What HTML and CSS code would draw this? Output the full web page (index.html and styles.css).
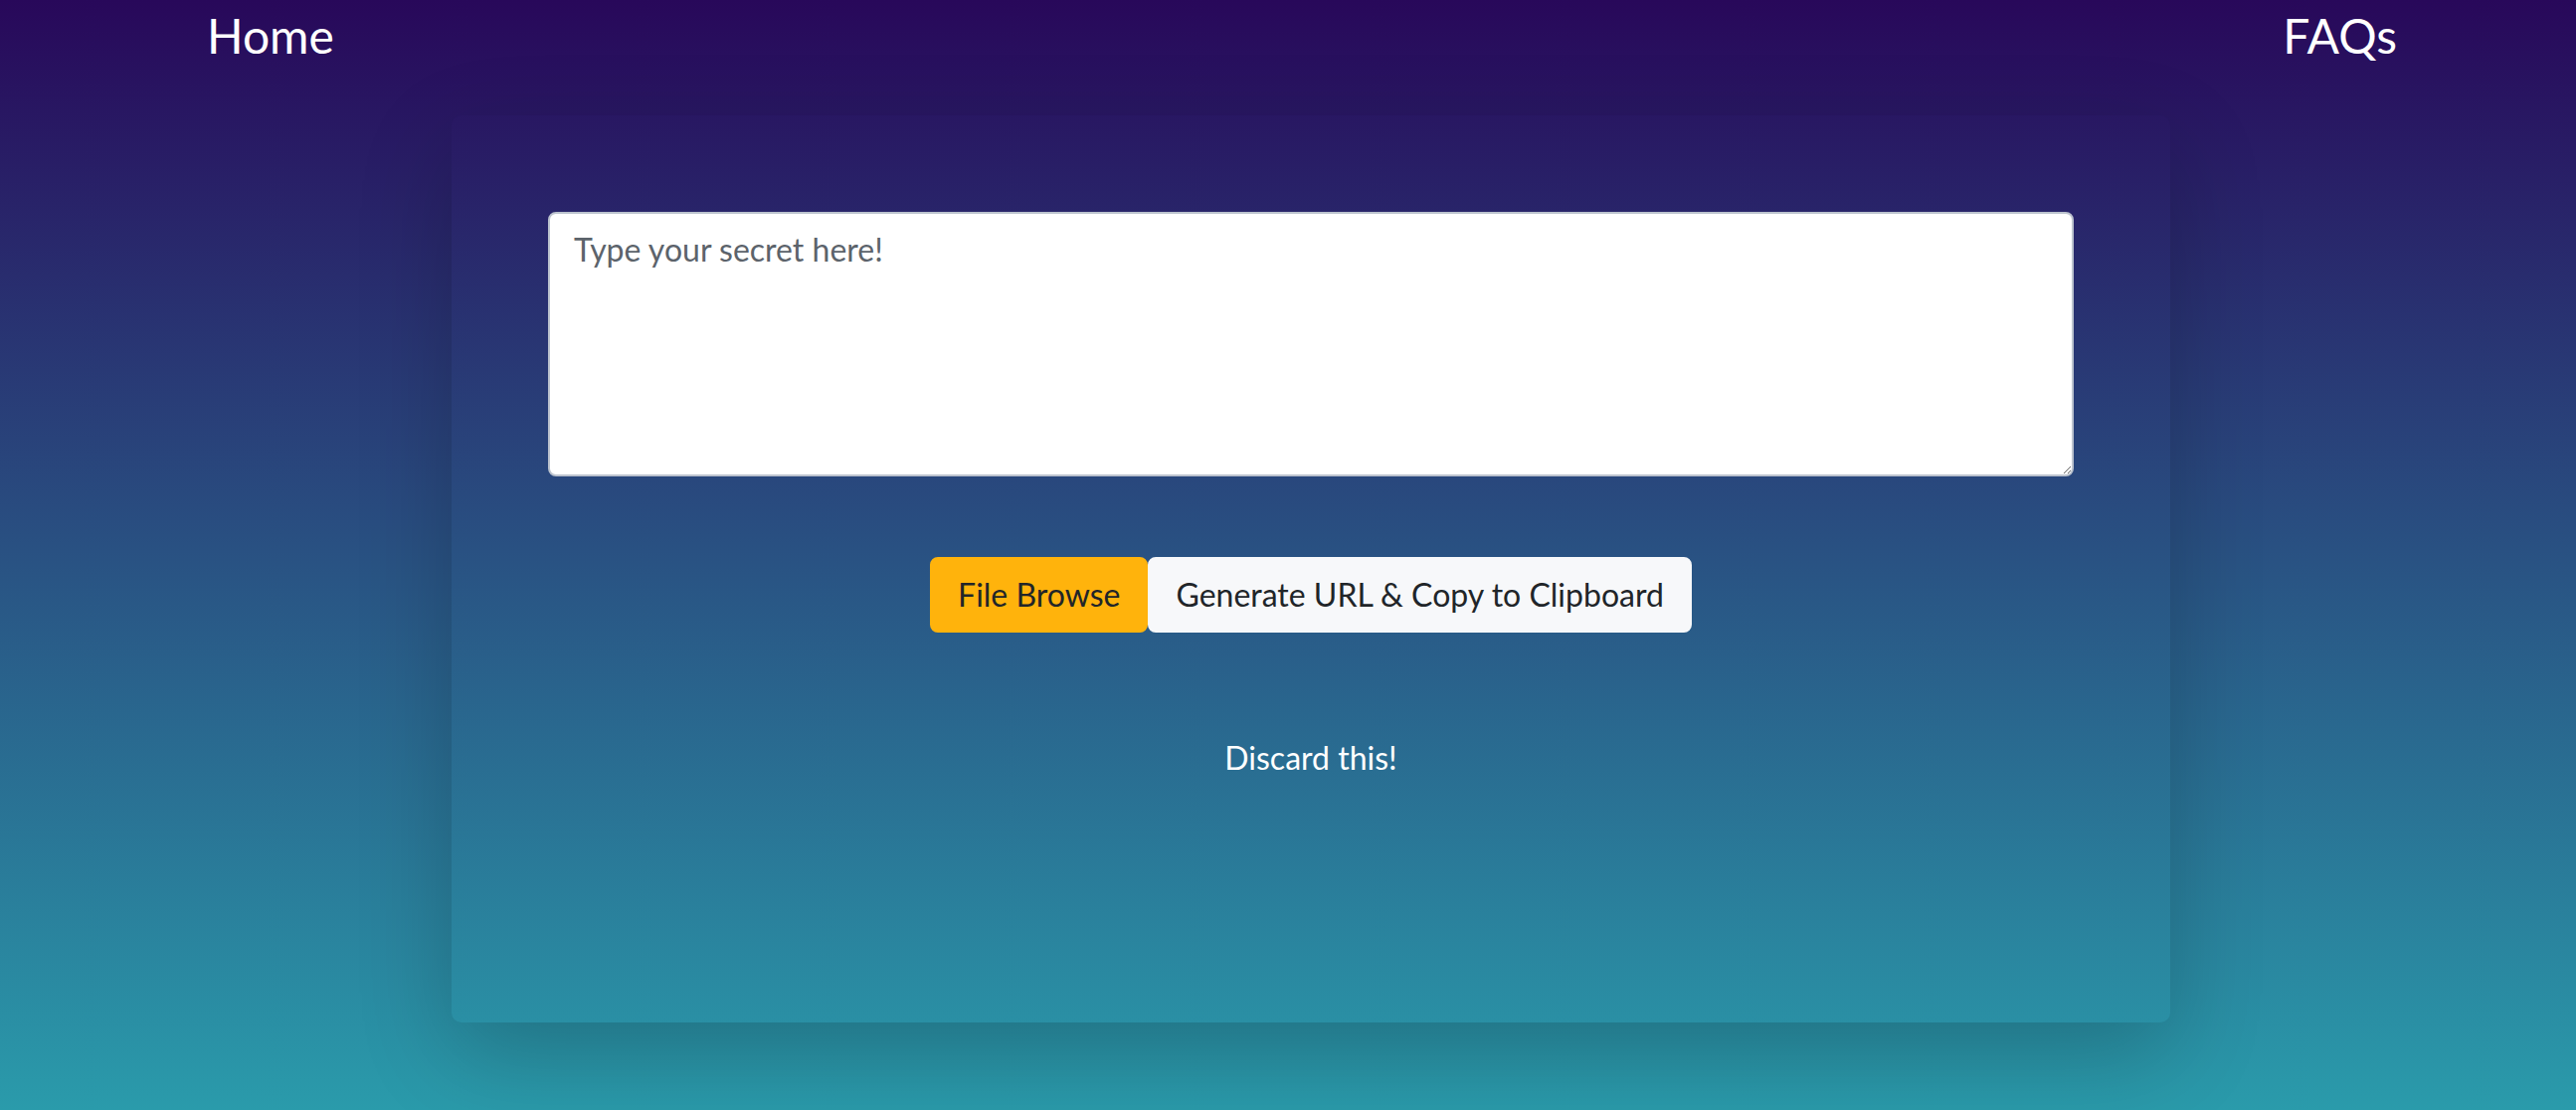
FILE: index.html
```html
<!DOCTYPE html>
<html lang="en">
<head>
<meta charset="utf-8">
<title>Secret</title>
<link rel="stylesheet" href="styles.css">
</head>
<body>
<nav class="nav">
  <a class="nav-link" href="#">Home</a>
  <a class="nav-link" href="#">FAQs</a>
</nav>
<main class="card">
  <textarea class="secret" placeholder="Type your secret here!"></textarea>
  <div class="actions">
    <button class="btn btn-warning" type="button">File Browse</button>
    <button class="btn btn-light" type="button">Generate URL &amp; Copy to Clipboard</button>
  </div>
  <div class="discard">Discard this!</div>
</main>
</body>
</html>
```

FILE: styles.css
```css
html, body {
  margin: 0;
  padding: 0;
}
body {
  height: 1116px;
  overflow: hidden;
  background: linear-gradient(to bottom, #28085a 0%, #2a9bab 100%);
  font-family: Lato, "Noto Sans", sans-serif;
  color: #fff;
}
.nav {
  display: flex;
  justify-content: space-between;
  padding: 0 180px 0 208px;
  height: 72px;
}
.nav-link {
  color: #fff;
  text-decoration: none;
  font-size: 48px;
  line-height: 72px;
}
.card {
  margin: 44px 0 0 454px;
  width: 1728px;
  box-sizing: border-box;
  padding: 97px 97px 242px;
  border-radius: 10px;
  box-shadow: 0 32px 96px rgba(0, 0, 0, 0.2);
  display: flex;
  flex-direction: column;
  align-items: center;
}
.secret {
  display: block;
  width: 100%;
  height: 266px;
  box-sizing: border-box;
  border: 2px solid #bcc3ce;
  border-radius: 8px;
  padding: 12px 24px;
  font-family: inherit;
  font-size: 32px;
  line-height: 1.5;
  color: #212529;
  background: #fff;
}
.secret::placeholder {
  color: #5c636b;
}
.actions {
  display: flex;
  margin-top: 81px;
}
.btn {
  font-family: inherit;
  font-size: 32px;
  line-height: 48px;
  height: 76px;
  padding: 12px 26px;
  border: 2px solid transparent;
  border-radius: 8px;
  color: #212529;
  cursor: pointer;
}
.btn-warning {
  background: #ffb30c;
  border-color: #ffb30c;
}
.btn-light {
  background: #f7f8fa;
  border-color: #f7f8fa;
}
.discard {
  margin-top: 102px;
  font-size: 32px;
  line-height: 48px;
  color: #fff;
}
```
